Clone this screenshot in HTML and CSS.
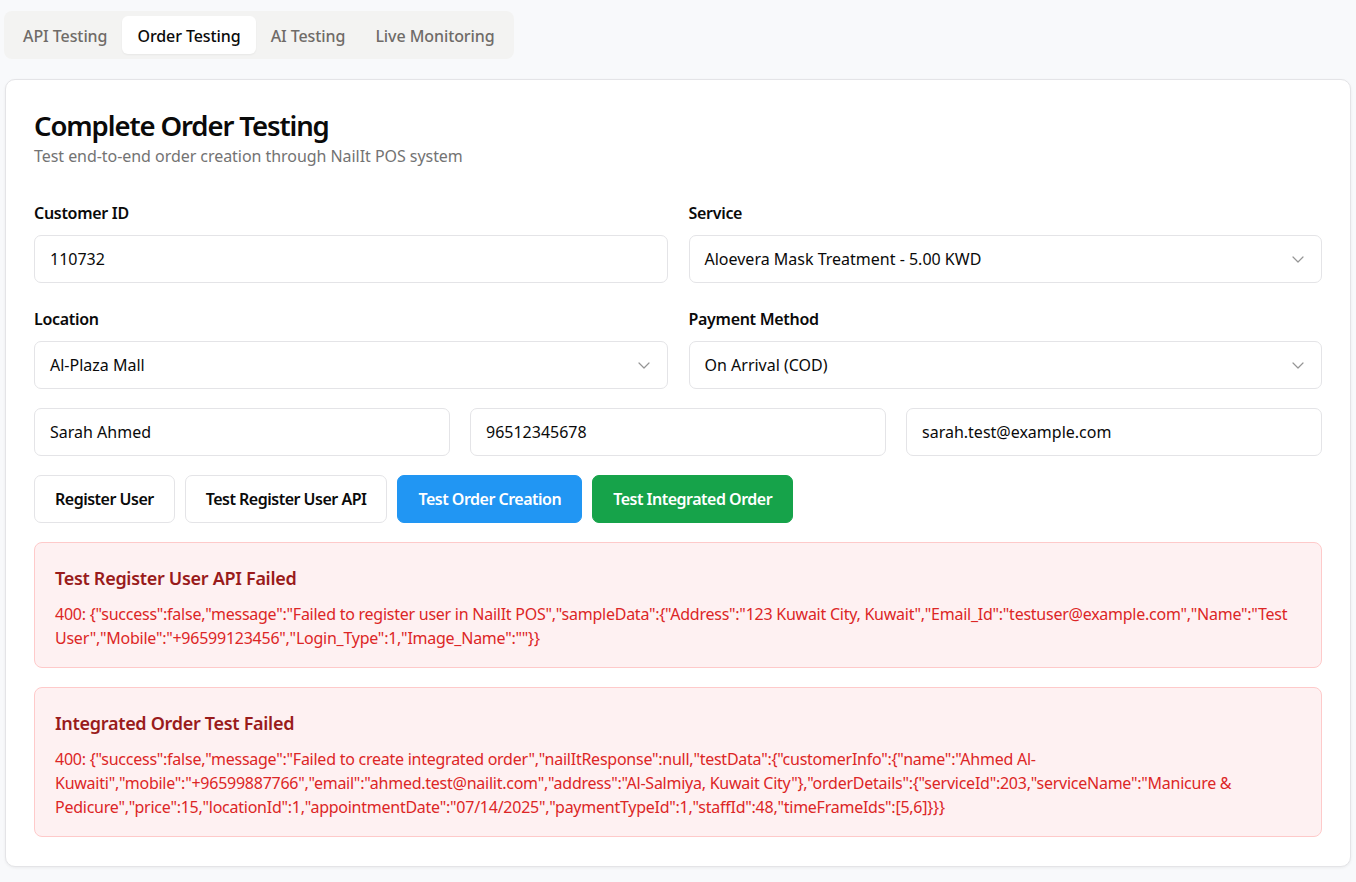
FILE: index.html
```html
<!DOCTYPE html>
<html lang="en">
<head>
<meta charset="utf-8">
<title>Order Testing</title>
<link rel="stylesheet" href="styles.css">
</head>
<body>
<div class="page">
  <nav class="tabs">
    <button class="tab">API Testing</button>
    <button class="tab active">Order Testing</button>
    <button class="tab">AI Testing</button>
    <button class="tab">Live Monitoring</button>
  </nav>

  <section class="card">
    <header class="card-header">
      <h1 class="title">Complete Order Testing</h1>
      <p class="subtitle">Test end-to-end order creation through NailIt POS system</p>
    </header>

    <div class="form-grid">
      <div class="field">
        <label class="label">Customer ID</label>
        <div class="input">110732</div>
      </div>
      <div class="field">
        <label class="label">Service</label>
        <div class="input select">
          <span>Aloevera Mask Treatment - 5.00 KWD</span>
          <svg class="chev" width="16" height="16" viewBox="0 0 16 16" fill="none" stroke="currentColor" stroke-width="1.2" stroke-linecap="round" stroke-linejoin="round"><path d="M3 6l5 5 5-5"/></svg>
        </div>
      </div>
      <div class="field">
        <label class="label">Location</label>
        <div class="input select">
          <span>Al-Plaza Mall</span>
          <svg class="chev" width="16" height="16" viewBox="0 0 16 16" fill="none" stroke="currentColor" stroke-width="1.2" stroke-linecap="round" stroke-linejoin="round"><path d="M3 6l5 5 5-5"/></svg>
        </div>
      </div>
      <div class="field">
        <label class="label">Payment Method</label>
        <div class="input select">
          <span>On Arrival (COD)</span>
          <svg class="chev" width="16" height="16" viewBox="0 0 16 16" fill="none" stroke="currentColor" stroke-width="1.2" stroke-linecap="round" stroke-linejoin="round"><path d="M3 6l5 5 5-5"/></svg>
        </div>
      </div>
    </div>

    <div class="row3">
      <div class="input">Sarah Ahmed</div>
      <div class="input">96512345678</div>
      <div class="input">sarah.test@example.com</div>
    </div>

    <div class="actions">
      <button class="btn outline">Register User</button>
      <button class="btn outline">Test Register User API</button>
      <button class="btn blue">Test Order Creation</button>
      <button class="btn green">Test Integrated Order</button>
    </div>

    <div class="alert">
      <h3 class="alert-title">Test Register User API Failed</h3>
      <p class="alert-body">400: {"success":false,"message":"Failed to register user in NailIt POS","sampleData":{"Address":"123 Kuwait City, Kuwait","Email_Id":"testuser@example.com","Name":"Test User","Mobile":"+96599123456","Login_Type":1,"Image_Name":""}}</p>
    </div>

    <div class="alert">
      <h3 class="alert-title">Integrated Order Test Failed</h3>
      <p class="alert-body">400: {"success":false,"message":"Failed to create integrated order","nailItResponse":null,"testData":{"customerInfo":{"name":"Ahmed Al-Kuwaiti","mobile":"+96599887766","email":"ahmed.test@nailit.com","address":"Al-Salmiya, Kuwait City"},"orderDetails":{"serviceId":203,"serviceName":"Manicure &amp; Pedicure","price":15,"locationId":1,"appointmentDate":"07/14/2025","paymentTypeId":1,"staffId":48,"timeFrameIds":[5,6]}}}</p>
    </div>
  </section>
</div>
</body>
</html>
```

FILE: styles.css
```css
* { box-sizing: border-box; }
html, body { margin: 0; padding: 0; }
body {
  background: #f8f9fb;
  font-family: "Noto Sans", "Open Sans", "Liberation Sans", sans-serif;
  font-size: 16px;
  line-height: 24px;
  color: #0a0a0a;
}
.page {
  padding: 11px 5px 14px 5px;
}
.tabs {
  display: inline-flex;
  align-items: center;
  background: #f3f3f2;
  border-radius: 8px;
  padding: 5px 4px;
  height: 48px;
  margin-left: -1px;
}
.tab {
  font: inherit;
  font-weight: 500;
  letter-spacing: -0.08px;
  background: transparent;
  border: none;
  color: #6f6b68;
  height: 38px;
  padding: 1px 15px 0 15px;
  border-radius: 6px;
  cursor: pointer;
}
.tab.active {
  background: #ffffff;
  color: #0a0a0a;
  box-shadow: 0 1px 2px rgba(0,0,0,0.05);
}
.card {
  margin-top: 20px;
  background: #ffffff;
  border: 1px solid #e4e4e7;
  border-radius: 10px;
  box-shadow: 0 1px 3px rgba(0,0,0,0.06);
  padding: 28px 28px 29px 28px;
  display: flex;
  flex-direction: column;
  gap: 19px;
}
.card-header { margin-bottom: 14px; }
.title {
  margin: 0;
  font-size: 27.5px;
  line-height: 35px;
  font-weight: 600;
  letter-spacing: -1.1px;
}
.subtitle {
  margin: 1px 0 0 0;
  color: #737373;
  font-size: 16px;
  line-height: 24px;
  letter-spacing: -0.05px;
}
.form-grid {
  display: grid;
  grid-template-columns: 1fr 1fr;
  column-gap: 21px;
  row-gap: 24px;
}
.field { display: flex; flex-direction: column; gap: 10px; }
.label { font-weight: 600; font-size: 16px; line-height: 24px; letter-spacing: -0.3px; }
.input {
  height: 48px;
  border: 1px solid #e4e4e7;
  border-radius: 7px;
  padding: 0 15px;
  display: flex;
  align-items: center;
  background: #fff;
  color: #0a0a0a;
}
.select { justify-content: space-between; }
.chev { color: #959595; margin-right: 0; }
.row3 {
  display: grid;
  grid-template-columns: 1fr 1fr 1fr;
  gap: 20px;
}
.actions { display: flex; gap: 10px; }
.btn {
  font: inherit;
  font-weight: 600;
  letter-spacing: -0.5px;
  height: 48px;
  padding: 0 20px;
  border-radius: 7px;
  border: 1px solid #e4e4e7;
  background: #fff;
  color: #0a0a0a;
  cursor: pointer;
}
.btn.blue { background: #2196f3; border-color: #2196f3; color: #fff; }
.btn.green { background: #16a34a; border-color: #16a34a; color: #fff; }
.alert {
  background: #fef1f2;
  border: 1px solid #fecaca;
  border-radius: 8px;
  padding: 21px 20px 17px 20px;
}
.alert-title {
  margin: 0 0 10px 0;
  font-size: 18px;
  line-height: 28px;
  font-weight: 600;
  letter-spacing: -0.3px;
  color: #991b1b;
}
.alert-body {
  margin: 0;
  color: #dc2626;
  font-size: 16px;
  line-height: 24px;
  letter-spacing: -0.25px;
  word-break: break-word;
}
```
